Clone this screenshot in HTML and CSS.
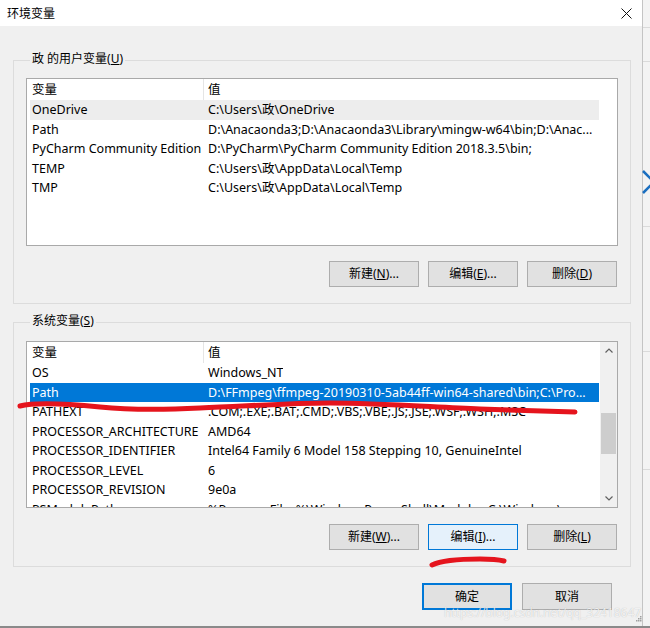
FILE: index.html
```html
<!DOCTYPE html>
<html lang="zh-CN">
<head>
  <meta charset="UTF-8">
  <title>环境变量</title>
  <link rel="stylesheet" href="styles.css">
</head>
<body>

<div class="screen">
  <div class="stage">
    <div class="dialog">
      <div class="titlebar">
        <span class="title">环境变量</span>
        <svg class="close" viewBox="0 0 11 11"><path d="M0.5 0.5 L10.5 10.5 M10.5 0.5 L0.5 10.5" /></svg>
      </div>

      <div class="content">
        <div class="group group-user">
          <div class="group-title">政 的用户变量(<u>U</u>)</div>
          <div class="list list-user">
            <div class="list-main">
              <div class="list-head"><span class="c1">变量</span><span class="c2">值</span></div>
              <div class="item hot"><span class="c1">OneDrive</span><span class="c2">C:\Users\政\OneDrive</span></div>
              <div class="item"><span class="c1">Path</span><span class="c2">D:\Anacaonda3;D:\Anacaonda3\Library\mingw-w64\bin;D:\Anac...</span></div>
              <div class="item"><span class="c1">PyCharm Community Edition</span><span class="c2">D:\PyCharm\PyCharm Community Edition 2018.3.5\bin;</span></div>
              <div class="item"><span class="c1">TEMP</span><span class="c2">C:\Users\政\AppData\Local\Temp</span></div>
              <div class="item"><span class="c1">TMP</span><span class="c2">C:\Users\政\AppData\Local\Temp</span></div>
            </div>
          </div>
          <div class="buttons">
            <button class="btn">新建(<u>N</u>)...</button>
            <button class="btn">编辑(<u>E</u>)...</button>
            <button class="btn">删除(<u>D</u>)</button>
          </div>
        </div>

        <div class="group group-sys">
          <div class="group-title">系统变量(<u>S</u>)</div>
          <div class="list list-sys">
            <div class="list-main">
              <div class="list-head"><span class="c1">变量</span><span class="c2">值</span></div>
              <div class="item"><span class="c1">OS</span><span class="c2">Windows_NT</span></div>
              <div class="item sel"><span class="c1">Path</span><span class="c2">D:\FFmpeg\ffmpeg-20190310-5ab44ff-win64-shared\bin;C:\Pro...</span></div>
              <div class="item"><span class="c1">PATHEXT</span><span class="c2">.COM;.EXE;.BAT;.CMD;.VBS;.VBE;.JS;.JSE;.WSF;.WSH;.MSC</span></div>
              <div class="item"><span class="c1">PROCESSOR_ARCHITECTURE</span><span class="c2">AMD64</span></div>
              <div class="item"><span class="c1">PROCESSOR_IDENTIFIER</span><span class="c2">Intel64 Family 6 Model 158 Stepping 10, GenuineIntel</span></div>
              <div class="item"><span class="c1">PROCESSOR_LEVEL</span><span class="c2">6</span></div>
              <div class="item"><span class="c1">PROCESSOR_REVISION</span><span class="c2">9e0a</span></div>
              <div class="item"><span class="c1">PSModulePath</span><span class="c2">%ProgramFiles%\WindowsPowerShell\Modules;C:\Windows\...</span></div>
            </div>
            <div class="scrollbar">
              <div class="arrow"><svg viewBox="0 0 8 5"><path d="M0.5 4.5 L4 1 L7.5 4.5" /></svg></div>
              <div class="thumb"></div>
              <div class="arrow arrow-down"><svg viewBox="0 0 8 5"><path d="M0.5 0.5 L4 4 L7.5 0.5" /></svg></div>
            </div>
          </div>
          <div class="buttons">
            <button class="btn">新建(<u>W</u>)...</button>
            <button class="btn focus">编辑(<u>I</u>)...</button>
            <button class="btn">删除(<u>L</u>)</button>
          </div>
        </div>

        <div class="dialog-buttons">
          <button class="btn btn-tall default">确定</button>
          <button class="btn btn-tall">取消</button>
        </div>
      </div>
    </div>

    <div class="behind">
      <div class="behind-row r1"></div>
      <div class="behind-row r2"></div>
      <div class="behind-row r3"></div>
      <div class="behind-row r4"></div>
      <div class="behind-row r5"></div>
    </div>
  </div>
  <div class="bottom-edge"></div>

  <!-- 截图上的红色手绘标记 -->
  <svg class="ink" viewBox="0 0 650 628">
    <path d="M20 406 C35 402, 60 403, 100 407 C130 410, 160 410, 200 408 C250 406, 290 403, 330 403 C380 403, 430 407, 480 409 C520 410, 550 411, 575 412" />
    <path d="M432 565 C440 561, 455 559, 480 559 C492 559, 500 560, 504 561" />
    <path class="ink-blue" d="M643 171 L654 182 L643 193" />
  </svg>

  <div class="watermark">https://blog.csdn.net/qq_32418647</div>
  <svg class="grip" viewBox="0 0 6 6"><rect x="4" y="0" width="1.5" height="1.5"/><rect x="2" y="2" width="1.5" height="1.5"/><rect x="4" y="2" width="1.5" height="1.5"/><rect x="0" y="4" width="1.5" height="1.5"/><rect x="2" y="4" width="1.5" height="1.5"/><rect x="4" y="4" width="1.5" height="1.5"/></svg>
</div>

</body>
</html>
```

FILE: styles.css
```css
* {
  box-sizing: border-box;
  margin: 0;
  padding: 0;
}

body {
  width: 650px;
  height: 628px;
  overflow: hidden;
  font-family: "Noto Sans", "Noto Sans CJK SC", sans-serif;
  font-size: 12px;
  color: #000;
  background: #8f8f8f;
}

.screen {
  position: relative;
  width: 650px;
  height: 628px;
  display: flex;
  flex-direction: column;
}

.stage {
  display: flex;
  height: 626px;
}

.dialog {
  width: 642px;
  background: #f0f0f0;
  display: flex;
  flex-direction: column;
}

.titlebar {
  height: 26px;
  background: #fff;
  display: flex;
  align-items: center;
  justify-content: space-between;
  padding: 0 10px 0 7px;
}

.close {
  width: 11px;
  height: 11px;
  fill: none;
  stroke: #111;
  stroke-width: 1;
}

.content {
  padding: 0 11px 0 13px;
}

.group {
  border: 1px solid #dcdcdc;
  padding: 0 12px 16px 12px;
}

.group-user {
  margin-top: 34px;
}

.group-sys {
  margin-top: 18px;
  padding-bottom: 16px;
}

.group-title {
  width: fit-content;
  margin: -11px 0 0 4px;
  padding: 0 2px;
  line-height: 18px;
  background: #f0f0f0;
}

.list {
  display: flex;
  margin-top: 10px;
  background: #fff;
  border: 1px solid #a9a9a9;
  overflow: hidden;
  font-size: 12.5px;
}

.list-user {
  height: 168px;
}

.list-sys {
  height: 167px;
  margin-top: 11px;
}

.list-main {
  flex: 1;
  padding-left: 3px;
  overflow: hidden;
}

.list-head {
  display: flex;
  height: 21px;
  line-height: 21px;
}

.list-head .c1 {
  width: 174px;
  padding-left: 2px;
  border-right: 1px solid #e5e5e5;
}

.list-head .c2 {
  padding-left: 4px;
}

.item {
  display: flex;
  width: 569px;
  height: 19.5px;
  line-height: 19.5px;
  white-space: nowrap;
  overflow: hidden;
}

.item .c1 {
  flex: none;
  width: 174px;
  padding-left: 2px;
  overflow: hidden;
}

.item .c2 {
  padding-left: 4px;
  overflow: hidden;
}

.item.hot {
  background: #ededed;
}

.item.sel {
  background: #0078d7;
  color: #fff;
}

.scrollbar {
  width: 17px;
  background: #f0f0f0;
  display: flex;
  flex-direction: column;
}

.arrow {
  height: 17px;
  display: flex;
  align-items: center;
  justify-content: center;
}

.arrow svg {
  width: 8px;
  height: 5px;
  fill: none;
  stroke: #606060;
  stroke-width: 1.2;
}

.arrow-down {
  margin-top: auto;
}

.thumb {
  height: 41px;
  margin: 54px 1px 0;
  background: #cdcdcd;
}

.buttons {
  display: flex;
  justify-content: flex-end;
  gap: 9px;
  margin-top: 15px;
  padding-right: 1px;
}

.group-sys .buttons {
  margin-top: 16px;
}

.btn {
  width: 90px;
  height: 26px;
  background: #e1e1e1;
  border: 1px solid #adadad;
  font: inherit;
  line-height: 16px;
  color: #000;
  display: flex;
  align-items: center;
  justify-content: center;
}

.btn.focus {
  background: #e5f1fb;
  border-color: #0078d7;
}

.btn-tall {
  height: 27px;
}

.btn.default {
  border: 2px solid #0078d7;
}

.dialog-buttons {
  display: flex;
  justify-content: flex-end;
  gap: 10px;
  margin-top: 16px;
  padding-right: 19px;
}

.behind {
  flex: 1;
  background: #f3f3f3;
  border-left: 1px solid #c4c4c4;
  display: flex;
  flex-direction: column;
  overflow: hidden;
}

.behind-row {
  border-bottom: 1px solid #dadada;
}

.r1 { height: 28px; }
.r2 { height: 34px; }
.r3 { height: 165px; }
.r4 { height: 125px; }
.r5 { height: 118px; }

.bottom-edge {
  height: 2px;
  background: #8a8a8a;
}

.ink {
  position: absolute;
  left: 0;
  top: 0;
  width: 650px;
  height: 628px;
  fill: none;
  stroke: #e5141d;
  stroke-width: 5;
  stroke-linecap: round;
  pointer-events: none;
}

.ink .ink-blue {
  stroke: #1b6fc0;
  stroke-width: 2.5;
  stroke-linecap: butt;
}

.watermark {
  position: absolute;
  left: 444px;
  top: 607px;
  font-size: 12px;
  line-height: 12px;
  color: rgba(255, 255, 255, 0.8);
  text-shadow: 0 0 1px rgba(0, 0, 0, 0.25);
}

.grip {
  position: absolute;
  left: 636px;
  top: 616px;
  width: 6px;
  height: 6px;
  fill: #a0a0a0;
}
```
